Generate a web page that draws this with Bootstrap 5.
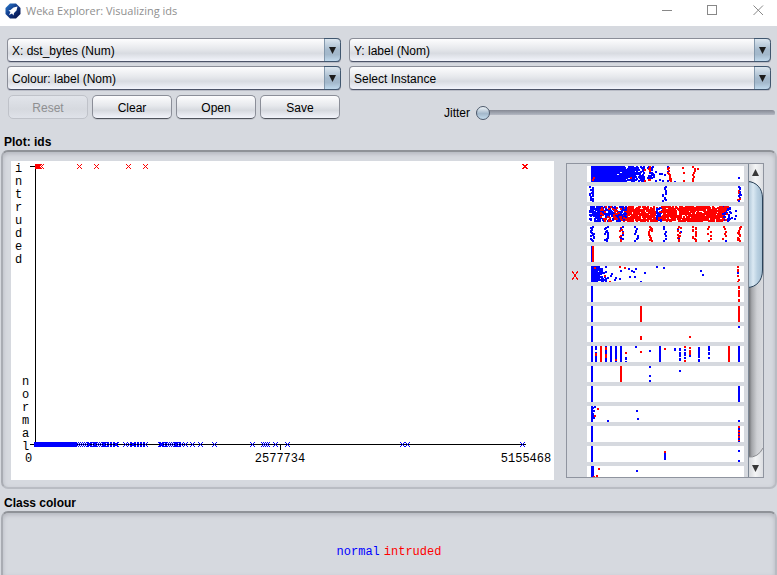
<!DOCTYPE html>
<html lang="en">
<head>
<meta charset="utf-8">
<meta name="viewport" content="width=device-width, initial-scale=1">
<title>Weka Explorer: Visualizing ids</title>
<link href="https://cdn.jsdelivr.net/npm/bootstrap@5.3.0/dist/css/bootstrap.min.css" rel="stylesheet">
<style>
  body { background: #d6d9df; font-family: "Liberation Sans", Arial, sans-serif; font-size: 12px; line-height: 16px; color: #000; }
  .titlebar { height: 26px; padding: 0 13px 5px 5px; gap: 5px; font-family: "Open Sans", "Noto Sans", sans-serif; font-size: 11px; color: #8f8f8f; }
  .winbtn { border: 0; background: none; padding: 0; line-height: 0; }
  .controls { display: grid; grid-template-columns: 334fr 422fr; gap: 4px 8px; padding: 12px 6px 0 7px; }
  .actions { display: grid; grid-template-columns: 332fr 435fr; padding: 5px 2px 0 8px; }
  .combo select { appearance: none; width: 100%; height: 24px; padding: 1px 28px 0 4px; border: 1px solid #8b8e98; border-bottom-color: #4d5468; border-radius: 4px; color: #000; background: linear-gradient(#fdfdfe, #e6e8ec 45%, #d8dbe1 65%, #f2f4fb); box-shadow: 0 1px 0 #b9bcc6; }
  .combo svg { position: absolute; top: 0; right: 0; pointer-events: none; }
  .nbtn { height: 24px; border: 1px solid #8b8e98; border-bottom-color: #4f535c; border-radius: 5px; color: #000; padding: 1px 0 0; flex: 1 1 0; background: linear-gradient(#fdfdfe, #e6e8ec 45%, #d6d9df 65%, #f2f4fb); box-shadow: 0 1px 0 #c3c6cd; }
  .nbtn:disabled { color: #8e8f91; border-color: #bfc2c9; background: linear-gradient(#e1e4ea, #d6d9df 60%, #dfe2e9); box-shadow: none; }
  .jitter { padding-left: 104px; padding-top: 10px; }
  .jitter input { appearance: none; height: 14px; background: none; min-width: 0; margin: 0 0 0 6px; }
  .jitter input::-webkit-slider-runnable-track { height: 6px; border-radius: 3px; background: linear-gradient(#858994, #a6abb6 60%, #b4b8c2 80%, #f0f1f4); }
  .jitter input::-webkit-slider-thumb { appearance: none; width: 14px; height: 14px; margin-top: -4px; border: 1px solid #4d5a6c; border-radius: 50%; background: linear-gradient(#eef3f7, #a3b8cb 55%, #c3dbec); }
  .group-title { font-size: 12px; line-height: 16px; font-weight: 700; margin: 0; padding: 13px 0 0 4px; }
  .group-title.lower { padding-top: 6px; }
  .panel { margin: 0 0 0 1px; border: 2px solid #b9bcc3; border-top-color: #8f9298; border-left-color: #a9acb3; border-radius: 7px; box-shadow: inset 0 2px 4px #b4b7be; }
  .plot-panel { padding: 9px 11px 7px 8px; gap: 12px; }
  .class-panel { border-bottom: 0; border-radius: 7px 7px 0 0; padding-top: 31px; }
  .plot-box { flex: 543 1 0; min-width: 0; }
  .attr-box { flex: 0 0 198px; margin-top: 2px; height: 315px; border: 1px solid #8f949f; overflow: hidden; }
  .strips { display: grid; grid-auto-rows: 16px; gap: 4px; padding: 2px 4px 0 20px; height: 313px; overflow: hidden; }
  .mono { font-family: "Liberation Mono", "Courier New", monospace; font-size: 12px; }
  .strips svg, .plot-box svg { display: block; shape-rendering: crispEdges; overflow: visible; }
  .strips svg { background: #fff; }
  .plot-box svg { background: #fff; width: 100%; height: auto; }
</style>
<script src="https://cdn.jsdelivr.net/npm/bootstrap@5.3.0/dist/js/bootstrap.bundle.min.js"></script>
</head>
<body class="d-flex flex-column min-vh-100">
<header class="titlebar bg-white d-flex align-items-center">
  <svg width="16" height="16" viewBox="0 0 16 16" aria-hidden="true">
    <defs><linearGradient id="globe" x1="0" y1="0" x2="1" y2="1"><stop offset="0" stop-color="#2d7fd0"/><stop offset=".45" stop-color="#123c8c"/><stop offset="1" stop-color="#050a3c"/></linearGradient></defs>
    <path d="M5 .5H11L15.500 5V11L11 15.500H5L.5 11V5Z" fill="url(#globe)"/>
    <path d="M12.500 3.500L8.500 4.500 5.500 7 3.500 7.500 5.500 9 4 12 7 10.500 8.500 12.500 9 10 11.500 7.500Z" fill="#fff"/>
  </svg>
  <span>Weka Explorer: Visualizing ids</span>
  <div class="ms-auto d-flex">
    <button class="winbtn me-4" aria-label="Minimize"><svg width="21" height="11"><path d="M0 5.500H10" stroke="#888"/></svg></button>
    <button class="winbtn me-4" aria-label="Maximize"><svg width="22" height="11"><rect x=".5" y=".5" width="9" height="9" fill="none" stroke="#888"/></svg></button>
    <button class="winbtn" aria-label="Close"><svg width="11" height="11"><path d="M.5 .5L10 10M10 .5L.5 10" stroke="#888"/></svg></button>
  </div>
</header>

<svg width="0" height="0" class="position-absolute" aria-hidden="true">
  <defs><linearGradient id="blue" x1="0" y1="0" x2="0" y2="1"><stop offset="0" stop-color="#dfe9f1"/><stop offset=".5" stop-color="#a5bacd"/><stop offset=".7" stop-color="#a3b8cb"/><stop offset="1" stop-color="#c3dcf0"/></linearGradient></defs>
  <symbol id="drop" viewBox="0 0 17 24"><path d="M.5 .5H12Q16.500 .5 16.500 4.500V19Q16.500 23.500 12 23.500H.5Z" fill="url(#blue)"/><path d="M.5 1V23" stroke="#8398ac"/><path d="M0 .5H12Q16.500 .5 16.500 4.500V19Q16.500 23.500 12 23.500H0" fill="none" stroke="#40566e"/><path d="M5 9H12L8.500 16Z" fill="#1c1c1c"/></symbol>
</svg>

<section class="controls">
  <div class="combo position-relative"><select aria-label="X axis"><option>X: dst_bytes (Num)</option></select><svg width="17" height="24"><use href="#drop"/></svg></div>
  <div class="combo position-relative"><select aria-label="Y axis"><option>Y: label (Nom)</option></select><svg width="17" height="24"><use href="#drop"/></svg></div>
  <div class="combo position-relative"><select aria-label="Colour"><option>Colour: label (Nom)</option></select><svg width="17" height="24"><use href="#drop"/></svg></div>
  <div class="combo position-relative"><select aria-label="Instance selection"><option>Select Instance</option></select><svg width="17" height="24"><use href="#drop"/></svg></div>
</section>
<section class="actions">
  <div class="d-flex gap-1">
    <button class="nbtn" disabled>Reset</button>
    <button class="nbtn">Clear</button>
    <button class="nbtn">Open</button>
    <button class="nbtn">Save</button>
  </div>
  <div class="jitter d-flex align-items-center">
    <label for="jitter">Jitter</label>
    <input id="jitter" type="range" class="flex-fill" min="0" max="50" value="0">
  </div>
</section>

<h2 class="group-title">Plot: ids</h2>
<section class="panel plot-panel d-flex align-items-start">
  <div class="plot-box"><svg id="plot" viewBox="0 0 543 319" class="mono" role="img" aria-label="label against dst_bytes"></svg></div>
  <div class="attr-box d-flex">
    <div class="strips flex-fill" id="strips"></div>
    <svg width="15" height="313" viewBox="0 0 15 313" class="flex-shrink-0" aria-hidden="true">
      <defs>
        <linearGradient id="track"><stop offset="0" stop-color="#5e5f62"/><stop offset=".25" stop-color="#a4a6aa"/><stop offset=".6" stop-color="#cfd1d5"/><stop offset="1" stop-color="#d9dbdf"/></linearGradient>
        <linearGradient id="thumb"><stop offset="0" stop-color="#a9c1d4"/><stop offset=".35" stop-color="#dbe9f3"/><stop offset=".65" stop-color="#b9d0e1"/><stop offset="1" stop-color="#a4bdd1"/></linearGradient>
        <linearGradient id="cap"><stop offset="0" stop-color="#d2d4d8"/><stop offset=".5" stop-color="#f4f5f6"/><stop offset="1" stop-color="#dcdee2"/></linearGradient>
      </defs>
      <path d="M0 0H15V313H0Z" fill="url(#track)"/>
      <path d="M0 0H15V34Q12 18 0 17Z" fill="url(#cap)"/>
      <path d="M0 17.500C8 18 14.500 24 14.500 34V106C14.500 117 8 123 0 123.500Z" fill="url(#thumb)" stroke="#2b435a"/>
      <path d="M0 293Q10 294 15 284V313H0Z" fill="url(#cap)"/>
      <path d="M0 293Q10 294 15 284" fill="none" stroke="#8b8d91"/>
      <path d="M.5 0V313" stroke="#7c8795"/>
      <path d="M4 12H11L7.500 5Z" fill="#383838"/>
      <path d="M4 301H11L7.500 308Z" fill="#383838"/>
    </svg>
  </div>
</section>

<h2 class="group-title lower">Class colour</h2>
<section class="panel class-panel flex-fill">
  <div class="mono d-flex justify-content-center gap-1">
    <span style="color:#00f">normal</span><span style="color:#f00">intruded</span>
  </div>
</section>

<script>
const NS = "http://www.w3.org/2000/svg", B = "#0000ff", R = "#ff0000";
let seed = 7;
const rnd = () => (seed = (seed * 16807) % 2147483647) / 2147483647;
const ri = (a, b) => Math.floor(a + rnd() * (b - a + 1));
function add(parent, name, attrs, text) {
  const e = document.createElementNS(NS, name);
  for (const k in attrs) e.setAttribute(k, attrs[k]);
  if (text !== undefined) e.textContent = text;
  parent.appendChild(e);
  return e;
}
const cross = (x, y) => `M${x-2} ${y-2}h1v1h-1zM${x+2} ${y-2}h1v1h-1zM${x-1} ${y-1}h1v1h-1zM${x+1} ${y-1}h1v1h-1zM${x} ${y}h1v1h-1zM${x-1} ${y+1}h1v1h-1zM${x+1} ${y+1}h1v1h-1zM${x-2} ${y+2}h1v1h-1zM${x+2} ${y+2}h1v1h-1z`;

/* Scatter plot: axes, labels and instances */
const plot = document.getElementById("plot");
add(plot, "path", {d: "M24 5h1v279h-1zM19 5h6v1h-6zM19 283h496v1h-496zM269 283h1v6h-1z", fill: "#000"});
[..."intruded"].forEach((c, i) => add(plot, "text", {x: 4, y: 11 + 13 * i}, c));
[..."normal"].forEach((c, i) => add(plot, "text", {x: 11, y: 224 + 13 * i}, c));
add(plot, "text", {x: 14, y: 301}, "0");
add(plot, "text", {x: 269, y: 301, "text-anchor": "middle"}, "2577734");
add(plot, "text", {x: 515, y: 301, "text-anchor": "middle"}, "5155468");
add(plot, "path", {fill: R, d: [26,27,28,30,68,85,117,134,513,514].map(x => cross(x, 5)).join("") + "M24 3h5v5h-5z"});
const xs = [67,69,71,73,75,77,78,81,83,84,86,88,90,92,93,95,98,101,104,105,114,118,121,122,125,128,131,134,149,150,151,153,156,158,160,162,164,165,167,170,174,181,189,203,241,252,254,256,264,276,391,396,511];
add(plot, "path", {fill: B, d: "M23 281h43v5h-43z" + xs.map(x => cross(x, 283)).join("")});

/* Attribute strips: each mark is [x, y, height, colour, width] */
const line = (x, c = B, w = 2) => [x, 0, 16, c, w];
const dots = (c, ...p) => p.map(([x, y, h = 2]) => [x, y, h, c, 2]);
function column(x, n, c1, c2, share = 0) {
  const out = [];
  n = Math.round(n * 1.3);
  for (let i = 0; i < n; i++) out.push([x - 2 + ri(0, 3), Math.round(i * 14 / (n - 1)), 2, rnd() < share ? c2 : c1, 2]);
  return out;
}
function cloud(x0, x1, n, c) {
  return Array.from({length: n}, () => [ri(x0, x1), ri(0, 14), 2, c, 2]);
}
const strips = [
  [line(4, B, 34), ...cloud(36, 46, 90, B), ...cloud(44, 56, 72, B), ...cloud(52, 66, 22, B), ...cloud(57, 62, 8, R),
   ...dots("#fff", [30,8,1],[33,6,1]), ...dots(R, [5,13],[6,11],[43,11],[95,1],[96,6],[96,14],[110,2]),
   ...dots(B, [68,5],[72,7],[74,7],[77,8],[68,14],[72,13],[75,14],[80,14],[87,15],[151,11]),
   ...column(82, 10, R, B, .05), ...column(107, 6, R, B)],
  [...column(4, 12, B), ...column(77, 10, B), ...column(152, 10, B, R, .3)],
  [...cloud(2, 12, 85, B), ...cloud(12, 36, 150, B), ...cloud(13, 34, 50, R), ...cloud(36, 69, 300, R), ...cloud(33, 38, 14, B),
   ...cloud(69, 74, 30, B), ...cloud(69, 74, 8, R), ...cloud(75, 136, 600, R), ...cloud(134, 144, 32, B), ...cloud(136, 140, 8, R), ...dots(B, [148,4],[148,9],[147,12])],
  [...column(5, 12, B), ...column(19, 10, B), ...column(34, 11, R, B, .4), ...column(49, 7, B, R, .2), ...column(63, 11, R), ...column(78, 5, B),
   ...column(92, 11, R, B, .05), ...column(107, 11, R), ...column(122, 5, R), ...column(137, 5, R, B, .3), ...column(152, 10, R)],
  [line(4, B, 1), line(5, R)],
  [line(4, B, 7), ...cloud(7, 14, 50, B), ...cloud(12, 18, 15, B), ...dots(R, [7,1],[17,9],[22,15],[32,0],[37,1],[150,0],[150,3,4],[150,9],[151,13],[150,15]),
   ...dots(B, [20,11],[23,9],[24,7],[27,13],[28,11],[33,4],[32,12],[41,2],[44,4],[42,10],[47,10],[46,5],[48,2],[53,15],[57,6],[69,0],[76,1],[113,4],[115,8],[150,6])],
  [line(4), ...dots(R, [151,0,3],[151,4,7],[151,13,3])],
  [line(4), line(53, R), line(151, R)],
  [line(4), ...dots(R, [53,10,4],[102,10]), ...dots(B, [151,0])],
  [line(4), line(8), line(13, R), line(18), line(23), line(28), line(33), line(72), line(141, R), line(151),
   ...dots("#fff", [8,4,2]), ...dots(R, [8,7,3],[18,1,3],[18,8,4],[28,13],[38,6],[53,5],[77,2],[97,0],[97,14],[102,1],[102,4,6]),
   ...dots(B, [38,11,3],[38,15,1],[48,0],[62,4],[87,2,3],[92,2,3],[92,6,5],[92,12,3],[97,3],[97,6,4],[97,11,2],[102,9],[111,1,11],[111,13,3],[121,0,5],[121,6,3],[121,11]) ],
  [line(4), line(33, R), ...dots(B, [62,0],[62,9],[62,14],[92,4])],
  [line(4), line(151)],
  [line(4), ...dots(B, [7,0],[5,1],[6,4],[5,7,5],[6,11],[20,14],[49,4],[50,12],[151,14]), ...dots(R, [10,2],[7,9])],
  [line(4), line(151), ...dots(R, [151,0],[151,4],[151,7],[151,10],[151,14,1])],
  [line(4), ...dots(R, [77,5]), ...dots(B, [77,7,7],[151,4],[151,14])],
  [line(4, B, 3), ...dots(R, [11,2],[9,9],[6,10]), ...dots(B, [49,4])]
];
const box = document.getElementById("strips");
strips.forEach((marks, i) => {
  const s = add(box, "svg", {width: "100%", height: 16, viewBox: "0 0 157 16", preserveAspectRatio: "xMinYMin"});
  for (const [x, y, h, c, w] of marks) add(s, "rect", {x, y, width: w, height: Math.min(h, 16 - y), fill: c});
  if (i === 5) add(s, "path", {d: "M-15 5L-9 14M-9 5L-15 14", stroke: R, fill: "none"});
});
</script>
</body>
</html>
